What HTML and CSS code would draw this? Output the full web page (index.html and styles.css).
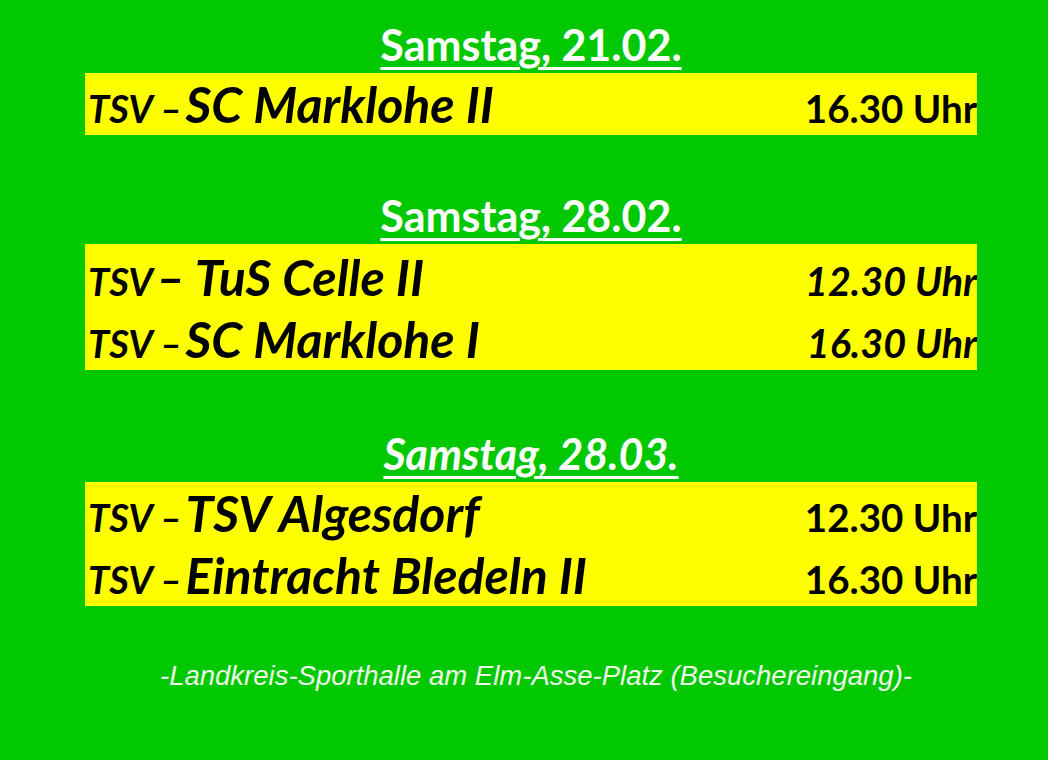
FILE: index.html
```html
<!DOCTYPE html>
<html lang="de">
<head>
    <meta charset="UTF-8">
    <meta name="viewport" content="width=device-width, initial-scale=1.0">
    <title>Heimspiele</title>
    <link rel="stylesheet" href="styles.css">
</head>
<body>
    <div class="container">
        <div class="day first">
            <h2 class="date">Samstag, 21.02.</h2>
            <div class="games one">
                <div class="game">
                    <span class="team"><span class="home">TSV –</span> <span class="guest">SC Marklohe II</span></span>
                    <span class="time">16.30 Uhr</span>
                </div>
            </div>
        </div>

        <div class="day second">
            <h2 class="date">Samstag, 28.02.</h2>
            <div class="games two">
                <div class="game">
                    <span class="team"><span class="home">TSV</span> <span class="guest">– TuS Celle II</span></span>
                    <span class="time italic">12.30 Uhr</span>
                </div>
                <div class="game">
                    <span class="team"><span class="home">TSV –</span> <span class="guest">SC Marklohe I</span></span>
                    <span class="time italic">16.30 Uhr</span>
                </div>
            </div>
        </div>

        <div class="day third">
            <h2 class="date italic">Samstag, 28.03.</h2>
            <div class="games three">
                <div class="game">
                    <span class="team"><span class="home">TSV –</span> <span class="guest">TSV Algesdorf</span></span>
                    <span class="time">12.30 Uhr</span>
                </div>
                <div class="game">
                    <span class="team"><span class="home">TSV –</span> <span class="guest">Eintracht Bledeln II</span></span>
                    <span class="time">16.30 Uhr</span>
                </div>
            </div>
        </div>

        <p class="place">-Landkreis-Sporthalle am Elm-Asse-Platz (Besuchereingang)-</p>
    </div>
</body>
</html>
```

FILE: styles.css
```css
html, body{
    margin: 0;
    padding: 0;
}
body{
    background-color: #02c802;
    font-family: Lato, "Open Sans", sans-serif;
    height: 760px;
    overflow: hidden;
}
.container{
    width: 892px;
    margin-left: 85px;
    padding-top: 20px;
}
.day.second{
    margin-top: 56px;
}
.day.third{
    margin-top: 59px;
}
.date{
    margin: 0 0 3px 0;
    height: 50px;
    line-height: 50px;
    text-align: center;
    color: #fff;
    font-size: 43px;
    font-weight: 700;
    text-decoration: underline;
    text-decoration-thickness: 3px;
    text-underline-offset: 6px;
}
.italic{
    font-style: italic;
}
.games{
    background-color: #ffff00;
    overflow: hidden;
}
.games.two{
    padding-top: 2px;
}
.game{
    display: flex;
    justify-content: space-between;
    align-items: baseline;
    height: 62px;
    line-height: 62px;
    color: #000;
    font-weight: 700;
    white-space: nowrap;
}
.team{
    font-style: italic;
    padding-left: 3px;
}
.home{
    font-size: 38px;
}
.guest{
    font-size: 50px;
}
.time{
    font-size: 38.5px;
}
.time.italic{
    font-size: 39.5px;
}
.place{
    margin: 54px 0 0 0;
    padding-left: 10px;
    text-align: center;
    color: #eef8e8;
    font-family: "Liberation Sans", Arial, sans-serif;
    font-style: italic;
    font-size: 27.5px;
}
```
